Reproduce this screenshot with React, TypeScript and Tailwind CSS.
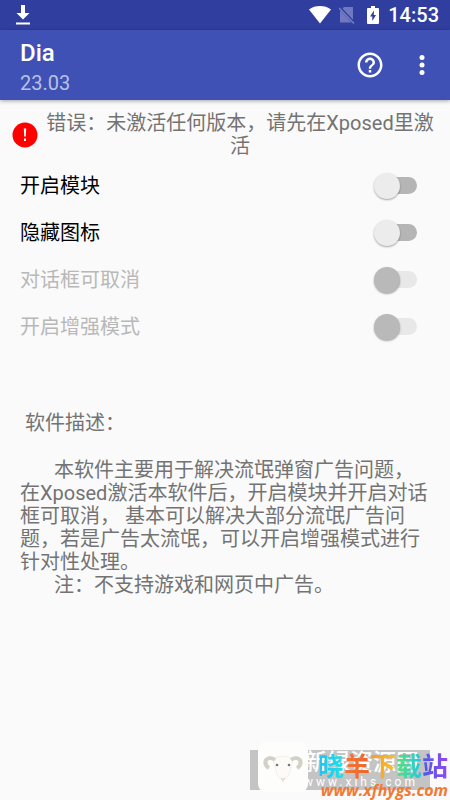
import { useState } from 'react';

interface SwitchItem {
  id: string;
  label: string;
  disabled: boolean;
}

const SWITCHES: SwitchItem[] = [
  { id: 'module', label: '开启模块', disabled: false },
  { id: 'hide-icon', label: '隐藏图标', disabled: false },
  { id: 'cancelable', label: '对话框可取消', disabled: true },
  { id: 'enhanced', label: '开启增强模式', disabled: true },
];

function StatusBar() {
  return (
    <div className="flex h-[30px] items-center justify-between bg-[#303f9f] pr-[11px] pl-[15px] text-white">
      <svg className="h-5 w-4" viewBox="0 0 16 20" fill="currentColor">
        <path d="M6 0h4v8h4.500l-6.500 6.500L1.500 8H6zM1 17.500h14v2H1z" />
      </svg>
      <div className="flex items-center">
        <svg className="mr-2 h-[18px] w-[22px]" viewBox="0 0 22 18" fill="currentColor">
          <path d="M0 3.6C3 1 7 0 11 0s8 1 11 3.6L11 17.5z" />
        </svg>
        <svg className="mr-3 h-[18px] w-4" viewBox="0 0 16 18">
          <path d="M5 1h9v15.500H1V5z" fill="#7079bf" />
          <path d="M0 1l15.500 16.500" stroke="#303f9f" strokeWidth="3" />
          <path d="M0 2l15 15.500" stroke="#7a83c4" strokeWidth="1.300" />
        </svg>
        <svg className="mr-[9px] h-[18px] w-3" viewBox="0 0 12 18">
          <path d="M4 0h4v2h3q1 0 1 1v14q0 1-1 1H1q-1 0-1-1V3q0-1 1-1h3z" fill="white" />
          <path d="M7 4.500L3 10.500h2.300V15L9 9H6.800z" fill="#303f9f" />
        </svg>
        <span className="font-[Roboto] text-xl leading-6 font-medium">14:53</span>
      </div>
    </div>
  );
}

function AppBar() {
  return (
    <header className="relative flex h-[70px] items-center justify-between bg-[#3f51b5] pr-3 pl-5 text-white shadow-[0_1px_4px_rgba(0,0,0,0.35)]">
      <div className="pt-1 font-[Roboto]">
        <h1 className="text-2xl leading-8 font-medium">Dia</h1>
        <p className="text-xl leading-7 text-[#b9c0e6]">23.03</p>
      </div>
      <div className="flex items-center gap-5">
        <button type="button" aria-label="帮助" className="flex size-8 items-center justify-center">
          <svg className="size-[30px]" viewBox="0 0 24 24" fill="currentColor">
            <path d="M11 18h2v-2h-2v2zm1-16C6.480 2 2 6.480 2 12s4.480 10 10 10 10-4.480 10-10S17.520 2 12 2zm0 18c-4.410 0-8-3.590-8-8s3.590-8 8-8 8 3.590 8 8-3.590 8-8 8zm0-14c-2.210 0-4 1.790-4 4h2c0-1.100.9-2 2-2s2 .9 2 2c0 2-3 1.750-3 5h2c0-2.250 3-2.500 3-5 0-2.210-1.790-4-4-4z" />
          </svg>
        </button>
        <button type="button" aria-label="更多" className="flex size-8 items-center justify-center">
          <svg className="size-[30px]" viewBox="0 0 24 24" fill="currentColor">
            <circle cx="12" cy="6" r="2" />
            <circle cx="12" cy="12" r="2" />
            <circle cx="12" cy="18" r="2" />
          </svg>
        </button>
      </div>
    </header>
  );
}

export default function App() {
  const [checked, setChecked] = useState<Record<string, boolean>>({});

  const toggle = (id: string) => {
    setChecked(prev => ({ ...prev, [id]: !prev[id] }));
  };

  return (
    <div className="flex min-h-screen flex-col bg-[#fafafa] font-[Roboto,'Noto_Sans_CJK_SC',sans-serif] text-xl text-[#737373]" lang="zh-CN">
      <StatusBar />
      <AppBar />

      {/* 错误提示 */}
      <div className="mt-3 flex items-center px-3">
        <svg className="size-[26px] shrink-0" viewBox="0 0 26 26">
          <circle cx="13" cy="13" r="12.500" fill="#f00" />
          <path d="M11.800 6.500h2.400l-.4 8h-1.600zM12 16.500h2v2.500h-2z" fill="#fff" />
        </svg>
        <p className="flex-1 pl-1 text-center leading-[23px]">错误：未激活任何版本，请先在Xposed里激活</p>
      </div>

      {/* 开关列表 */}
      <ul className="mt-1">
        {SWITCHES.map(item => (
          <li key={item.id}>
            <label className={`flex h-[47px] items-center justify-between pr-8 pl-5 ${item.disabled ? 'text-[#b8b8b8]' : 'text-black'}`}>
              {item.label}
              <span className="relative flex h-[26px] w-11 items-center">
                <input
                  type="checkbox"
                  role="switch"
                  checked={!!checked[item.id]}
                  disabled={item.disabled}
                  onChange={() => toggle(item.id)}
                  className="peer ml-1 h-[17px] w-[39px] appearance-none rounded-full bg-[#b5b5b5] checked:bg-[#ff80ab] disabled:bg-[#e8e8e8]"
                />
                <span className="pointer-events-none absolute left-0 size-[26px] rounded-full bg-[#ececec] shadow-[0_1px_2px_rgba(0,0,0,0.35)] peer-checked:left-[18px] peer-checked:bg-[#ff4081] peer-disabled:bg-[#b9b9b9]" />
              </span>
            </label>
          </li>
        ))}
      </ul>

      {/* 软件描述 */}
      <section className="mt-[62px] px-5 leading-[23px]">
        <h2 className="pl-[5px]">软件描述：</h2>
        <p className="mt-6 indent-[34px]">
          本软件主要用于解决流氓弹窗广告问题，在Xposed激活本软件后，开启模块并开启对话框可取消， 基本可以解决大部分流氓广告问题，若是广告太流氓，可以开启增强模式进行针对性处理。
        </p>
        <p className="indent-[34px]">注：不支持游戏和网页中广告。</p>
      </section>

      {/* 水印 */}
      <footer className="relative mt-auto flex h-[65px] justify-end pr-5">
        <div className="mt-[15px] h-10 w-[180px] overflow-hidden bg-[#c4c4c4] pl-[54px] whitespace-nowrap text-white">
          <p className="text-[23px] leading-[26px] font-medium">新绿资源网</p>
          <p className="text-xs leading-3 tracking-[3px]">www.xlhs.com</p>
        </div>
        <svg className="absolute top-[7px] right-[142px] size-[50px]" viewBox="0 0 50 50">
          <rect width="50" height="50" rx="8" fill="#fdfdfb" />
          <path d="M15 17q10-6 20 0l-3 12q-2 8-7 9-5-1-7-9z" fill="#fcfbf7" stroke="#f3f0ea" />
          <path d="M17 18q-5-4-9 0-2 5 3 8" fill="none" stroke="#d3d0c5" strokeWidth="4" />
          <path d="M33 18q5-4 9 0 2 5-3 8" fill="none" stroke="#d3d0c5" strokeWidth="4" />
          <circle cx="19" cy="23" r="1.300" fill="#777" />
          <circle cx="31" cy="23" r="1.300" fill="#777" />
          <path d="M23 36l2 1.500 2-1.500M25 37.500v2" fill="none" stroke="#e6c8c0" />
        </svg>
        <div className="absolute top-[17px] right-[2px] text-right whitespace-nowrap">
          <p className="text-[26px] leading-[30px] font-bold text-transparent">
            <span className="bg-linear-to-r from-[#20c4f4] to-[#20e0e8] bg-clip-text">晓</span>
            <span className="bg-linear-to-r from-[#f07838] to-[#f06428] bg-clip-text">羊</span>
            <span className="bg-linear-to-r from-[#f09c30] to-[#fcc020] bg-clip-text">下</span>
            <span className="bg-linear-to-r from-[#58e070] to-[#20c8e0] bg-clip-text">载</span>
            <span className="bg-linear-to-r from-[#4858e8] to-[#9048f0] bg-clip-text">站</span>
          </p>
          <p className="font-['Open_Sans'] text-base leading-4 font-bold text-[#f07a35] italic">www.xfhygs.com</p>
        </div>
      </footer>
    </div>
  );
}
